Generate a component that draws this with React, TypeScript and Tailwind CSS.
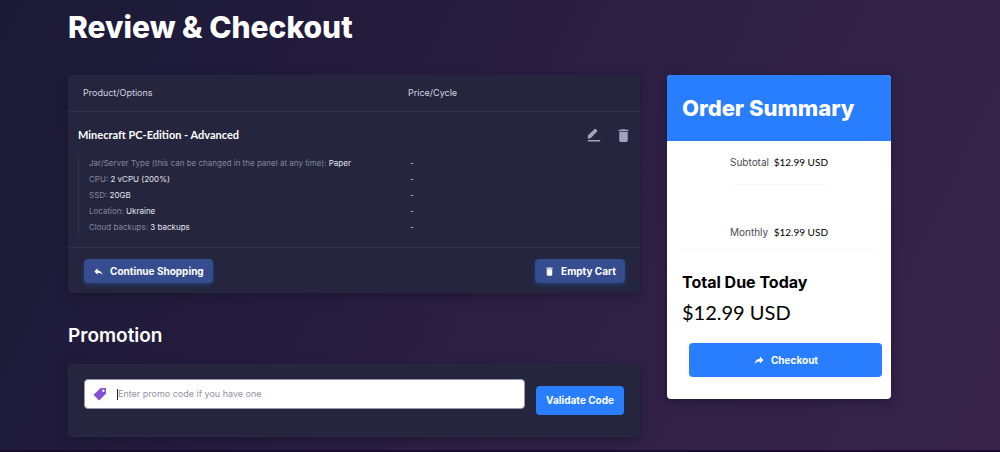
import React from "react";
import { MdDelete, MdReply } from "react-icons/md";

const options = [
  { label: "Jar/Server Type (this can be changed in the panel at any time)", value: "Paper" },
  { label: "CPU", value: "2 vCPU (200%)" },
  { label: "SSD", value: "20GB" },
  { label: "Location", value: "Ukraine" },
  { label: "Cloud backups", value: "3 backups" },
];

function PencilLine() {
  return (
    <svg viewBox="0 0 14 14" className="size-[14px]" fill="currentColor" aria-hidden="true">
      <path d="M.8 10.600V7.600L7.500.9a.9.9 0 0 1 1.200 0L10.200 2.400a.9.9 0 0 1 0 1.200L3.400 10.600zM.8 12H13.200v1.500H.8z" />
    </svg>
  );
}

function Tag() {
  return (
    <svg viewBox="0 0 14 14" className="size-[14px] text-[#8550d5]" fill="currentColor" aria-hidden="true">
      <path
        fillRule="evenodd"
        d="M8 1h4.500a.5.5 0 0 1 .5.5V6.200a1 1 0 0 1-.3.7L6.700 12.900a.8.8 0 0 1-1.200 0L1.100 8.500a.8.8 0 0 1 0-1.200L7.300 1.300A1 1 0 0 1 8 1zM10.400 2.500a1.200 1.200 0 1 0 0 2.400a1.200 1.200 0 1 0 0-2.400z"
      />
    </svg>
  );
}

function Cart() {
  return (
    <section className="rounded bg-[#25253d] shadow-[0_3px_10px_rgba(20,18,42,0.5)]">
      <table className="w-full table-fixed border-collapse text-left">
        <thead>
          <tr className="h-9 border-b border-[#31314b] text-[9px] text-[#d5d6e2]">
            <th scope="col" className="w-[340px] pl-[15px] font-normal">Product/Options</th>
            <th scope="col" className="font-normal">Price/Cycle</th>
          </tr>
        </thead>
        <tbody>
          <tr className="h-11">
            <th scope="rowgroup" className="pt-1 pl-[10px] font-['Lato',sans-serif] text-[11px] font-bold text-white">
              Minecraft PC-Edition - Advanced
            </th>
            <td className="pt-1 pr-2">
              <div className="flex items-center justify-end gap-[14px] text-[#a0a3be]">
                <button type="button" aria-label="Edit"><PencilLine /></button>
                <button type="button" aria-label="Remove"><MdDelete size={17} /></button>
              </div>
            </td>
          </tr>
          {options.map((o) => (
            <tr key={o.label} className="h-4 text-[8px] leading-4">
              <td className="pl-[10px]">
                <div className="border-l border-[#33334d] pl-[10px] text-[#85879c]">
                  {o.label}: <span className="text-[#e4e5f0]">{o.value}</span>
                </div>
              </td>
              <td className="pl-[2px] text-[#d5d6e2]">-</td>
            </tr>
          ))}
        </tbody>
      </table>
      <div className="mt-3 flex items-center justify-between border-t border-[#31314b] pt-[11px] pr-[15px] pb-[10px] pl-4">
        <button type="button" className="flex h-6 items-center gap-[6px] rounded-sm bg-[#354d8e] px-[9px] text-[10px] font-bold text-white shadow-[0_2px_5px_rgba(40,90,170,0.45)]">
          <MdReply size={11} />
          Continue Shopping
        </button>
        <button type="button" className="flex h-6 items-center gap-[6px] rounded-sm bg-[#354d8e] px-[9px] text-[10px] font-bold text-white shadow-[0_2px_5px_rgba(40,90,170,0.45)]">
          <MdDelete size={11} />
          Empty Cart
        </button>
      </div>
    </section>
  );
}

function Promotion() {
  return (
    <section>
      <h2 className="mt-[31px] mb-4 text-[19px] leading-6 font-semibold text-white">Promotion</h2>
      <form className="flex gap-[11px] rounded border border-[#292941] bg-[#25253d] px-[15px] pt-[14px] pb-[21px] shadow-[0_3px_10px_rgba(20,18,42,0.5)]">
        <label className="flex h-[30px] flex-1 items-center rounded-sm border border-[#9a98ac] bg-white pl-2">
          <Tag />
          <span className="ml-[10px] h-[11px] w-px bg-[#222233]" />
          <input
            type="text"
            aria-label="Promo code"
            placeholder="Enter promo code if you have one"
            className="min-w-0 flex-1 text-[9px] text-[#333] outline-none placeholder:text-[#92939e]"
          />
        </label>
        <button type="button" className="mt-[7px] h-[29px] rounded-sm bg-[#287eff] px-[10px] text-[10px] font-bold text-white">
          Validate Code
        </button>
      </form>
    </section>
  );
}

function Summary() {
  return (
    <aside className="overflow-hidden rounded bg-white text-black shadow-[0_3px_10px_rgba(20,18,42,0.5)]">
      <h2 className="bg-[#287eff] px-[15px] py-[18px] text-[22px] leading-[30px] font-extrabold text-white">Order Summary</h2>
      <dl className="text-[10px]">
        <div className="mx-auto flex h-11 w-[98px] items-center justify-between border-b border-[#f9f9fa]">
          <dt className="text-[#4b4b52]">Subtotal</dt>
          <dd className="font-['Lato',sans-serif]">$12.99 USD</dd>
        </div>
        <div className="mx-[15px] border-b border-[#f7f7f8] pt-[39px] pb-[9px]">
          <div className="mx-auto flex w-[98px] items-center justify-between leading-4">
            <dt className="text-[#4b4b52]">Monthly</dt>
            <dd className="font-['Lato',sans-serif]">$12.99 USD</dd>
          </div>
        </div>
      </dl>
      <div className="px-[15px] pt-[22px]">
        <h3 className="text-[16px] leading-5 font-bold">Total Due Today</h3>
        <p className="mt-2 font-['Lato',sans-serif] text-[20px] leading-6">$12.99 USD</p>
      </div>
      <div className="pt-[19px] pr-[9px] pb-[22px] pl-[22px]">
        <button type="button" className="flex h-[34px] w-full items-center justify-center gap-[6px] rounded-sm bg-[#287eff] text-[10px] font-bold text-white">
          <MdReply size={12} className="-scale-x-100" />
          Checkout
        </button>
      </div>
    </aside>
  );
}

export default function App() {
  return (
    <div className="min-h-screen border-b-2 border-[#160f28] bg-linear-[115deg,#1a1a36_0%,#251c3e_35%,#2e2045_60%,#38244b_100%] pr-[109px] pl-[68px] font-['Inter',sans-serif]">
      <h1 className="pt-[7px] text-[30px] leading-10 font-extrabold text-white">Review &amp; Checkout</h1>
      <main className="mt-7 grid grid-cols-[minmax(0,1fr)_224px] items-start gap-[27px]">
        <div>
          <Cart />
          <Promotion />
        </div>
        <Summary />
      </main>
    </div>
  );
}
